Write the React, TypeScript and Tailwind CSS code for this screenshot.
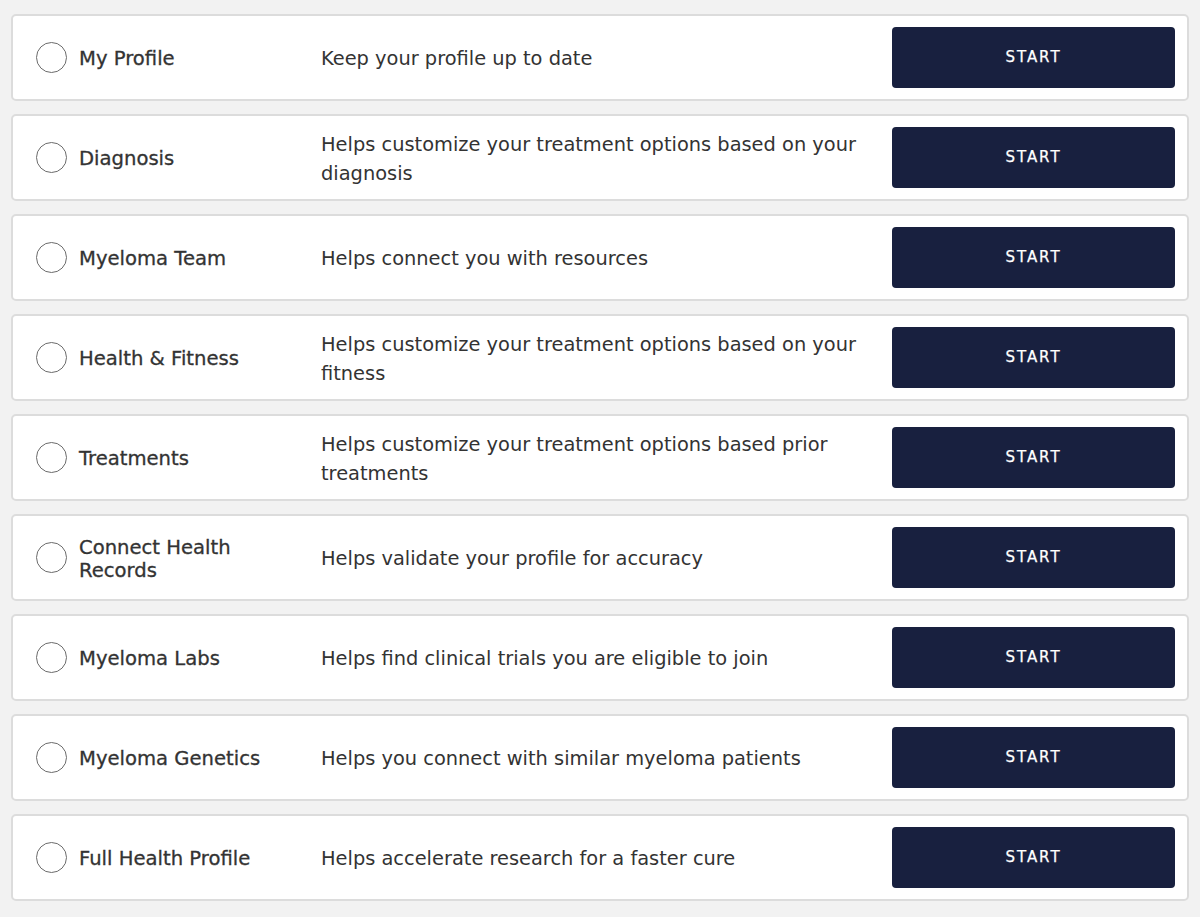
const steps = [
  { title: "My Profile", desc: "Keep your profile up to date" },
  { title: "Diagnosis", desc: "Helps customize your treatment options based on your diagnosis" },
  { title: "Myeloma Team", desc: "Helps connect you with resources" },
  { title: "Health & Fitness", desc: "Helps customize your treatment options based on your fitness" },
  { title: "Treatments", desc: "Helps customize your treatment options based prior treatments" },
  { title: "Connect Health Records", desc: "Helps validate your profile for accuracy" },
  { title: "Myeloma Labs", desc: "Helps find clinical trials you are eligible to join" },
  { title: "Myeloma Genetics", desc: "Helps you connect with similar myeloma patients" },
  { title: "Full Health Profile", desc: "Helps accelerate research for a faster cure" },
];

function StepRow({ title, desc }: { title: string; desc: string }) {
  return (
    <div className="flex h-[87px] items-center rounded-[5px] border-2 border-[#dcdcdc] bg-white pl-[23px] pr-[12px]">
      <div className="h-[31px] w-[31px] shrink-0 rounded-full border-[1.5px] border-[#6b6b6b]" />
      <div className="ml-[12px] mt-[2px] w-[242px] shrink-0 pr-[14px] text-[19.6px] leading-[23px] text-[#333] [-webkit-text-stroke:0.3px_#333]">
        {title}
      </div>
      <div className="mt-[2px] w-[552px] shrink-0 text-[19.4px] leading-[29px] text-[#333]">{desc}</div>
      <button className="ml-auto h-[61px] w-[283px] shrink-0 rounded-[4px] bg-[#18203f] text-[15px] tracking-[0.13em] text-white [-webkit-text-stroke:0.25px_#fff]">
        START
      </button>
    </div>
  );
}

export default function App() {
  return (
    <div
      className="min-h-screen bg-[#f2f2f2] px-[11px] pt-[14px] pb-[14px]"
      style={{ fontFamily: '"DejaVu Sans", "Noto Sans", sans-serif' }}
    >
      <div className="flex flex-col gap-[13px]">
        {steps.map((s) => (
          <StepRow key={s.title} title={s.title} desc={s.desc} />
        ))}
      </div>
    </div>
  );
}
